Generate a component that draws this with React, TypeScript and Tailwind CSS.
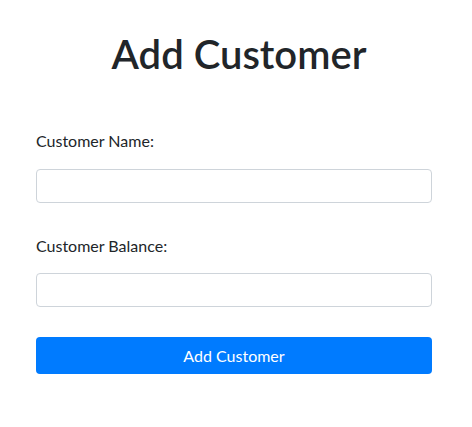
export default function App() {
  return (
    <div className="min-h-screen bg-white text-[#212529] font-['Lato',sans-serif]">
      <div className="ml-[36px] w-[396px] pt-[30px]">
        <h1 className="pl-[10px] text-center text-[40px] leading-[48px] font-semibold">Add Customer</h1>
        <form className="mt-[51px] flex flex-col" onSubmit={(e) => e.preventDefault()}>
          <label className="text-base leading-6">Customer Name:</label>
          <input
            type="text"
            className="mt-[16px] h-[34px] w-full rounded border border-[#ced4da] bg-white px-3"
          />
          <label className="mt-[31px] text-base leading-6">Customer Balance:</label>
          <input
            type="number"
            className="mt-[15px] h-[34px] w-full rounded border border-[#ced4da] bg-white px-3"
          />
          <button
            type="submit"
            className="mt-[30px] h-[37px] w-full rounded bg-[#007bff] text-base text-white"
          >
            Add Customer
          </button>
        </form>
      </div>
    </div>
  );
}
